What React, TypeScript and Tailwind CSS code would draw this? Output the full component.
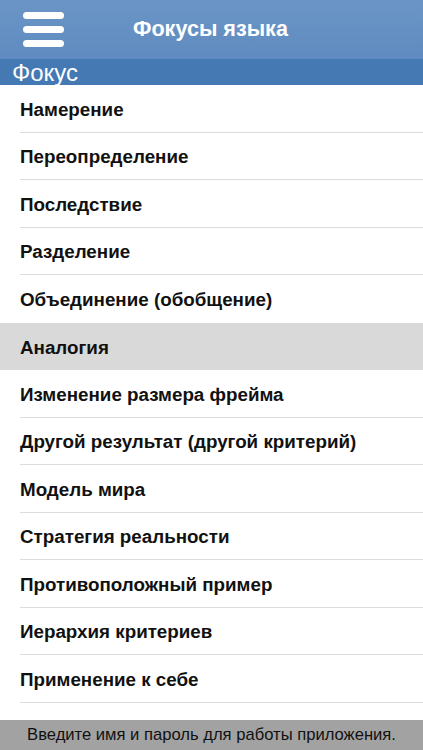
import React from 'react';

const items = [
  'Намерение',
  'Переопределение',
  'Последствие',
  'Разделение',
  'Объединение (обобщение)',
  'Аналогия',
  'Изменение размера фрейма',
  'Другой результат (другой критерий)',
  'Модель мира',
  'Стратегия реальности',
  'Противоположный пример',
  'Иерархия критериев',
  'Применение к себе',
  '',
];

// index of the highlighted row
const selected = 5;

export default function App() {
  return (
    <div
      className="relative w-[423px] h-[750px] overflow-hidden bg-white"
      style={{ fontFamily: '"Liberation Sans", Arial, sans-serif' }}
    >
      {/* Top bar */}
      <div className="h-[59px] flex items-center bg-gradient-to-b from-[#6b95c6] to-[#5f8bc0]">
        <button className="w-[85px] h-[59px] flex flex-col items-center justify-center gap-[7px] pl-[1px]">
          <span className="block w-[41px] h-[7px] rounded-full bg-white" />
          <span className="block w-[41px] h-[7px] rounded-full bg-white" />
          <span className="block w-[41px] h-[7px] rounded-full bg-white" />
        </button>
        <h1 className="ml-[48px] text-white text-[21.6px] font-bold">Фокусы языка</h1>
      </div>

      {/* Section header */}
      <div className="h-[26px] bg-[#4479b4] flex items-center px-[12px] text-white text-[24px] leading-none pt-[1px]">
        Фокус
      </div>

      {/* List */}
      <ul>
        {items.map((label, i) => (
          <li
            key={i}
            className={`h-[47.5px] pl-[20px] ${i === selected ? 'bg-[#d9d9d9]' : 'bg-white'}`}
          >
            <div
              className={`h-full flex items-center pt-[3px] text-[18.8px] font-bold text-[#111] ${
                i === selected || i === selected - 1 ? '' : 'border-b border-[#dcdcdc]'
              }`}
            >
              {label}
            </div>
          </li>
        ))}
      </ul>

      {/* Status bar overlay */}
      <div className="absolute left-0 right-0 bottom-0 h-[30px] bg-[#a2a2a2] flex items-center justify-center text-[16.6px] text-[#111]">
        Введите имя и пароль для работы приложения.
      </div>
    </div>
  );
}
